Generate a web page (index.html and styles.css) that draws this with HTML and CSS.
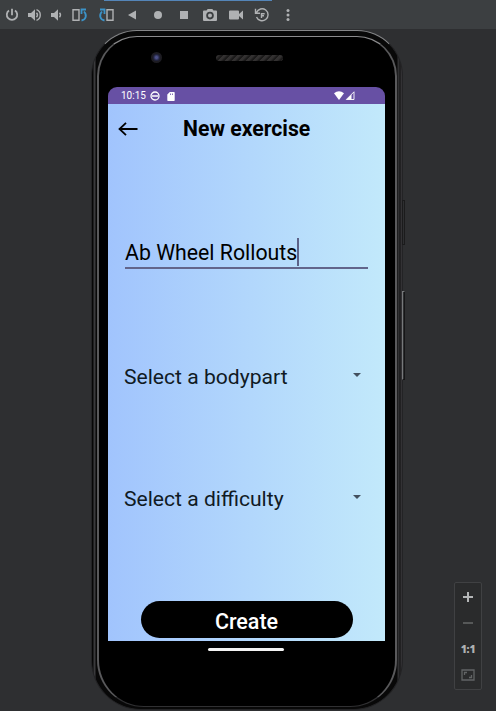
FILE: index.html
```html
<!DOCTYPE html>
<html lang="en">
<head>
<meta charset="utf-8">
<title>New exercise</title>
<link rel="stylesheet" href="styles.css">
</head>
<body>
<header class="toolbar">
  <svg class="icon" viewBox="0 0 16 16"><path d="M5 3.400a5.200 5.200 0 1 0 6 0M8 1.800v6.400" class="stroke"/></svg>
  <svg class="icon" viewBox="0 0 16 16"><path d="M1 6h3l4-3.800v11.600L4 10H1z" class="fill"/><path d="M9.500 5.800q2 2.200 0 4.400M9.500 2.700c5 1.600 5 9 0 10.600" class="stroke thin"/></svg>
  <svg class="icon" viewBox="0 0 16 16"><path d="M2 6h3l4-3.800v11.600L5 10H2z" class="fill"/><path d="M10.500 5.800q2 2.200 0 4.400" class="stroke thin"/></svg>
  <svg class="icon" viewBox="0 0 16 16"><path d="M1 2.700h6v10.600H1z" class="stroke thin"/><path d="M9.500 13.500c4.500-.8 5.800-5.500 2.500-9M9.500 7V2.500H14" class="stroke blue"/></svg>
  <svg class="icon" viewBox="0 0 16 16"><path d="M9 2.700h6v10.600H9z" class="stroke thin"/><path d="M6.500 13.500C2 12.700.7 8 4 4.500M6.500 7V2.500H2" class="stroke blue"/></svg>
  <svg class="icon" viewBox="0 0 16 16"><path d="M12 3.500v9L4 8z" class="fill"/></svg>
  <svg class="icon" viewBox="0 0 16 16"><circle cx="8" cy="8" r="4" class="fill"/></svg>
  <svg class="icon" viewBox="0 0 16 16"><path d="M4 4h8v8H4z" class="fill"/></svg>
  <svg class="icon" viewBox="0 0 16 16"><path fill-rule="evenodd" d="M2 3.500h2.500L5.700 2h4.600l1.200 1.500H14q1 0 1 1V13q0 1-1 1H2q-1 0-1-1V4.500q0-1 1-1zM8 4.800a3.800 3.800 0 1 0 0 7.600 3.800 3.800 0 0 0 0-7.600z" class="fill"/><circle cx="8" cy="8.600" r="2" class="fill"/></svg>
  <svg class="icon" viewBox="0 0 16 16"><path d="M2 3.500h8q1 0 1 1V7l4-3.500v9L11 9v2.500q0 1-1 1H2q-1 0-1-1v-7q0-1 1-1z" class="fill"/></svg>
  <svg class="icon" viewBox="0 0 16 16"><path d="M2.500 5.500A6 6 0 1 1 2.500 10M1.500 1.800v4.400H6M7.500 11V6.700h3.200M7.500 8.800H10" class="stroke thin"/></svg>
  <svg class="icon" viewBox="0 0 16 16"><circle cx="8" cy="3.600" r="1.500" class="fill"/><circle cx="8" cy="8" r="1.500" class="fill"/><circle cx="8" cy="12.400" r="1.500" class="fill"/></svg>
</header>
<main class="stage">
  <div class="phone">
    <div class="bezel">
      <div class="top-bezel"><span class="camera"></span><span class="speaker"></span></div>
      <div class="screen">
        <div class="status">
          <span class="time">10:15</span>
          <svg class="dnd" viewBox="0 0 10 10"><circle cx="5" cy="5" r="4"/><path d="M2 5h6"/></svg>
          <svg class="sd" viewBox="0 0 8 9"><path fill-rule="evenodd" d="M2.800 0H7q.7 0 .7.7v7.600q0 .7-.7.7H1q-.7 0-.7-.7V2.600zM3 1.500v1.500h.8V1.500zM5 1.500v1.500h.8V1.500z"/></svg>
          <svg class="signal" viewBox="0 0 22 10"><path d="M0 2.200Q5-1.500 10 2.200L5 9z" fill="#fff"/><path d="M20 .8V8.500H12.300z" fill="none" stroke="#fff" stroke-width=".9"/><path d="M17.500 3.500V8.500h-5z" fill="#fff"/></svg>
        </div>
        <div class="app">
          <div class="heading">
            <svg class="back" viewBox="0 0 20 14"><path d="M19.500 7H1.500M8 .8L1.500 7 8 13.200"/></svg>
            <h1>New exercise</h1>
          </div>
          <div class="field"><span>Ab Wheel Rollouts</span><i class="caret"></i></div>
          <div class="select bodypart"><span>Select a bodypart</span><i class="arrow"></i></div>
          <div class="select difficulty"><span>Select a difficulty</span><i class="arrow"></i></div>
          <button class="create">Create</button>
        </div>
      </div>
      <div class="home"></div>
    </div>
    <i class="key power"></i>
    <i class="key volume"></i>
  </div>
  <aside class="zoom">
    <svg viewBox="0 0 12 12"><path d="M6 1v10M1 6h10" stroke="#b4b6b7" stroke-width="2"/></svg>
    <svg viewBox="0 0 12 12"><path d="M1 6h10" stroke="#626465" stroke-width="1.600"/></svg>
    <span>1:1</span>
    <svg class="fit" viewBox="0 0 14 12"><path d="M1 1h12v10H1zM3.500 6V3.500H6M8 8.500h2.500V6" fill="none" stroke="#626465" stroke-width="1.300"/></svg>
  </aside>
</main>
</body>
</html>
```

FILE: styles.css
```css
* { box-sizing: border-box; }
body {
  margin: 0;
  width: 496px;
  height: 711px;
  overflow: hidden;
  background: #2e2f31;
  font-family: Roboto, sans-serif;
}
.toolbar {
  height: 29px;
  padding-top: 1px;
  display: grid;
  grid-template-columns: 24px 22px 22px 24px 27px repeat(7, 26px);
  place-items: center;
  background: linear-gradient(#5485b8, #5485b8) 104px 0 / 168px 1px no-repeat, #3c3f41;
}
.icon { width: 16px; height: 16px; overflow: visible; }
.fill { fill: #afb1b3; }
.stroke { fill: none; stroke: #afb1b3; stroke-width: 1.800; }
.thin { stroke-width: 1.400px; }
.stroke.blue { stroke: #3c93c8; }
.stage {
  height: 682px;
  display: flex;
  justify-content: space-between;
  align-items: flex-start;
  padding: 1px 14px 0 91px;
}
.phone {
  position: relative;
  width: 312px;
  height: 680px;
  padding: 5px 5px 3px;
  border: 1px solid #232325;
  border-top-color: #858688;
  border-radius: 46px 46px 50px 50px;
  background: linear-gradient(90deg, #060606 0 1px, #3a3a3c 2px 3px, #080808 4px 305px, #303032 306px 307px, #101010 308px, #333235 309px);
}
.bezel {
  height: 671px;
  border: 2px solid #59595b;
  border-top: 1px solid #8b8b8d;
  border-bottom: 1px solid #303032;
  border-radius: 40px 40px 47px 47px;
  background: #000;
  padding: 0 9px;
}
.top-bezel { height: 50px; padding: 15px 103px 0 43px; display: flex; justify-content: space-between; }
.camera {
  width: 11px;
  height: 11px;
  border: 2px solid #1d1c22;
  border-radius: 50%;
  background: radial-gradient(#4c5087 0 1px, #22243f 3px);
}
.speaker {
  width: 67px;
  height: 6px;
  margin-top: 3px;
  border-radius: 3px;
  background: repeating-linear-gradient(135deg, #333131 0 2px, #1b1a1a 4px 5px);
}
.screen { width: 277px; height: 554px; border-radius: 9px 9px 0 0; overflow: hidden; }
.status { height: 17px; display: flex; align-items: center; padding: 1px 29px 0 13px; background: #6750a4; color: #fff; }
.time { width: 29px; font-size: 10px; line-height: 16px; }
.dnd { width: 10px; height: 10px; fill: none; stroke: #fff; stroke-width: 1.300; }
.sd { width: 8px; height: 9px; margin-left: 7px; fill: #fff; }
.signal { width: 22px; height: 10px; margin-left: auto; }
.app {
  height: 537px;
  padding: 0 17px;
  background: linear-gradient(90deg, #a1c4fd, #c2e9fb);
  color: #000;
}
.heading { height: 49px; display: flex; align-items: center; margin-left: -7px; }
.back { width: 20px; height: 14px; margin: 0 45px 0 0; fill: none; stroke: #000; stroke-width: 1.800; }
h1 { margin: 0; font-size: 21.200px; line-height: 28px; font-weight: 700; white-space: nowrap; }
.field {
  height: 32px;
  margin-top: 84px;
  width: 243px;
  display: flex;
  align-items: flex-start;
  border-bottom: 2px solid #62658b;
  font-size: 21.300px;
  line-height: 32px;
  white-space: nowrap;
}
.caret { width: 2px; height: 28px; margin-top: 1px; background: #5c6288; }
.select {
  height: 30px;
  margin-right: 7px;
  margin-left: -1px;
  display: flex;
  align-items: center;
  justify-content: space-between;
  font-size: 21.100px;
  color: #101a24;
}
.bodypart { margin-top: 92px; }
.difficulty { margin-top: 92px; }
.arrow { margin-top: -2px; border: 4px solid transparent; border-top-color: #43505f; border-bottom: 0; }
.create {
  display: block;
  width: 212px;
  height: 37px;
  margin: 88px 0 0 16px;
  padding: 4px 1px 0 0;
  border: 0;
  border-radius: 19px;
  background: #000;
  color: #fff;
  font: 500 21.500px/33px Roboto, sans-serif;
}
.home { width: 76px; height: 3px; margin: 7px 0 0 100px; border-radius: 2px; background: #f4f4f4; }
.key { position: absolute; right: -3px; width: 3px; border: 1px solid #1b1b1c; }
.power { top: 169px; height: 45px; }
.volume { top: 260px; height: 89px; border-color: #77797b #161617 #161617 #77797b; }
.zoom {
  width: 28px;
  height: 108px;
  margin-top: 552px;
  padding-top: 1px;
  display: grid;
  grid-template-rows: repeat(4, 26px);
  place-items: center;
  border: 1px solid #404143;
  border-radius: 2px;
  background: #2a2b2c;
}
.zoom svg { width: 12px; height: 12px; }
.zoom .fit { width: 14px; }
.zoom span { color: #afb1b3; font: 800 10.500px "Open Sans", sans-serif; letter-spacing: -.2px; }
```
